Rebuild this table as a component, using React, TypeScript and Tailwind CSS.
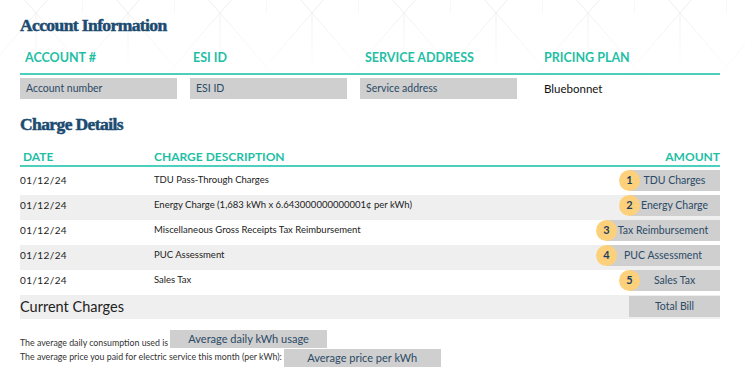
import React from 'react';

const charges = [
  { date: '01/12/24', desc: 'TDU Pass-Through Charges', num: 1, label: 'TDU Charges', wide: false },
  { date: '01/12/24', desc: 'Energy Charge (1,683 kWh x 6.643000000000001¢ per kWh)', num: 2, label: 'Energy Charge', wide: false },
  { date: '01/12/24', desc: 'Miscellaneous Gross Receipts Tax Reimbursement', num: 3, label: 'Tax Reimbursement', wide: true },
  { date: '01/12/24', desc: 'PUC Assessment', num: 4, label: 'PUC Assessment', wide: true },
  { date: '01/12/24', desc: 'Sales Tax', num: 5, label: 'Sales Tax', wide: false },
];

function Pattern() {
  // faint isometric line pattern behind the top heading
  return (
    <svg className="pointer-events-none absolute left-0 top-0" width="745" height="80" viewBox="0 0 745 80">
      <defs>
        <pattern id="iso" width="92" height="106" patternUnits="userSpaceOnUse" x="-10" y="-40">
          <path d="M0 0 L46 53 L92 0 M0 106 L46 53 L92 106 M46 53 L46 106 M0 0 L0 53" fill="none" stroke="#ededed" strokeWidth="1" />
        </pattern>
        <linearGradient id="fade" x1="0" y1="0" x2="0" y2="1">
          <stop offset="0" stopColor="#fff" stopOpacity="1" />
          <stop offset="1" stopColor="#fff" stopOpacity="0" />
        </linearGradient>
        <mask id="fadeMask">
          <rect width="745" height="80" fill="url(#fade)" />
        </mask>
      </defs>
      <rect width="745" height="80" fill="url(#iso)" mask="url(#fadeMask)" />
    </svg>
  );
}

function Heading({ children, className = '' }: { children: React.ReactNode; className?: string }) {
  return (
    <h2
      className={`text-[17.5px] leading-[20px] font-bold tracking-[-0.6px] text-[#1b4b70] [-webkit-text-stroke:0.5px_#1b4b70] ${className}`}
      style={{ fontFamily: '"Liberation Serif", serif' }}
    >
      {children}
    </h2>
  );
}

export default function App() {
  return (
    <div className="relative h-[386px] w-[745px] overflow-hidden bg-white" style={{ fontFamily: 'Lato, "Noto Sans", sans-serif' }}>
      <Pattern />
      <div className="relative ml-[20px] w-[700px] pt-[15px]">
        <Heading>Account Information</Heading>

        <div className="mt-[15px] grid grid-cols-[170px_170px_170px_1fr] border-b-2 border-[#4ccfbb] pb-[7px] text-[12.5px] leading-[16px] font-bold text-[#1fbfa6]">
          <div className="pl-[5px]">ACCOUNT #</div>
          <div className="pl-[3px]">ESI ID</div>
          <div className="pl-[5px]">SERVICE ADDRESS</div>
          <div className="pl-[14px]">PRICING PLAN</div>
        </div>

        <div className="mt-[3px] grid grid-cols-[170px_170px_170px_1fr] text-[10.5px] text-[#2b4a66]">
          <div className="flex h-[21px] w-[157px] items-center bg-[#cfcfcf] pl-[6px]">Account number</div>
          <div className="flex h-[21px] w-[157px] items-center bg-[#cfcfcf] pl-[6px]">ESI ID</div>
          <div className="flex h-[21px] w-[157px] items-center bg-[#cfcfcf] pl-[6px]">Service address</div>
          <div className="flex h-[21px] items-center pl-[14px] text-[11.5px] text-[#111]">Bluebonnet</div>
        </div>

        <Heading className="mt-[15px]">Charge Details</Heading>

        <div className="mt-[15px] flex border-b-2 border-[#4ccfbb] pb-[1px] text-[12px] leading-[15px] font-bold text-[#1fbfa6]">
          <div className="w-[134px] pl-[3px]">DATE</div>
          <div className="flex-1">CHARGE DESCRIPTION</div>
          <div>AMOUNT</div>
        </div>

        <div className="mt-[3px]">
          {charges.map((c, i) => (
            <div key={c.num} className={`flex h-[25px] items-start ${i % 2 === 1 ? 'bg-[#efefef]' : 'bg-white'}`}>
              <div className="flex h-[21px] w-[134px] items-center text-[10px] tracking-[0.4px] text-[#222]">{c.date}</div>
              <div className="flex h-[21px] flex-1 items-center text-[9.5px] text-[#222]">{c.desc}</div>
              <div
                className={`relative flex h-[21px] items-center justify-center bg-[#cfcfcf] text-[10.5px] text-[#2b4a66] ${
                  c.wide ? 'w-[114px]' : 'w-[91px]'
                }`}
              >
                <span className="absolute -left-[10px] top-0 flex h-[21px] w-[21px] items-center justify-center rounded-full bg-[#fdd17c] text-[11px] font-bold text-[#1c3f5e]">
                  {c.num}
                </span>
                {c.label}
              </div>
            </div>
          ))}
          <div className="flex h-[24px] items-start bg-[#efefef]">
            <div className="flex h-[23px] flex-1 items-center text-[14.5px] text-[#222]">Current Charges</div>
            <div className="mt-[1px] flex h-[21px] w-[91px] items-center justify-center bg-[#cfcfcf] text-[10.5px] text-[#2b4a66]">
              Total Bill
            </div>
          </div>
        </div>

        <div className="mt-[11px] text-[8.8px] text-[#333]">
          <div className="flex items-end">
            <span className="leading-[11px]">The average daily consumption used is</span>
            <div className="ml-[2px] flex h-[18px] w-[157px] items-center justify-center bg-[#cfcfcf] text-[11px] text-[#2b4a66]">
              Average daily kWh usage
            </div>
          </div>
          <div className="mt-[1px] flex items-start">
            <span className="mt-[2px] leading-[11px]">The average price you paid for electric service this month (per kWh):</span>
            <div className="ml-[2px] flex h-[18px] w-[157px] items-center justify-center bg-[#cfcfcf] text-[11px] text-[#2b4a66]">
              Average price per kWh
            </div>
          </div>
        </div>
      </div>
    </div>
  );
}
